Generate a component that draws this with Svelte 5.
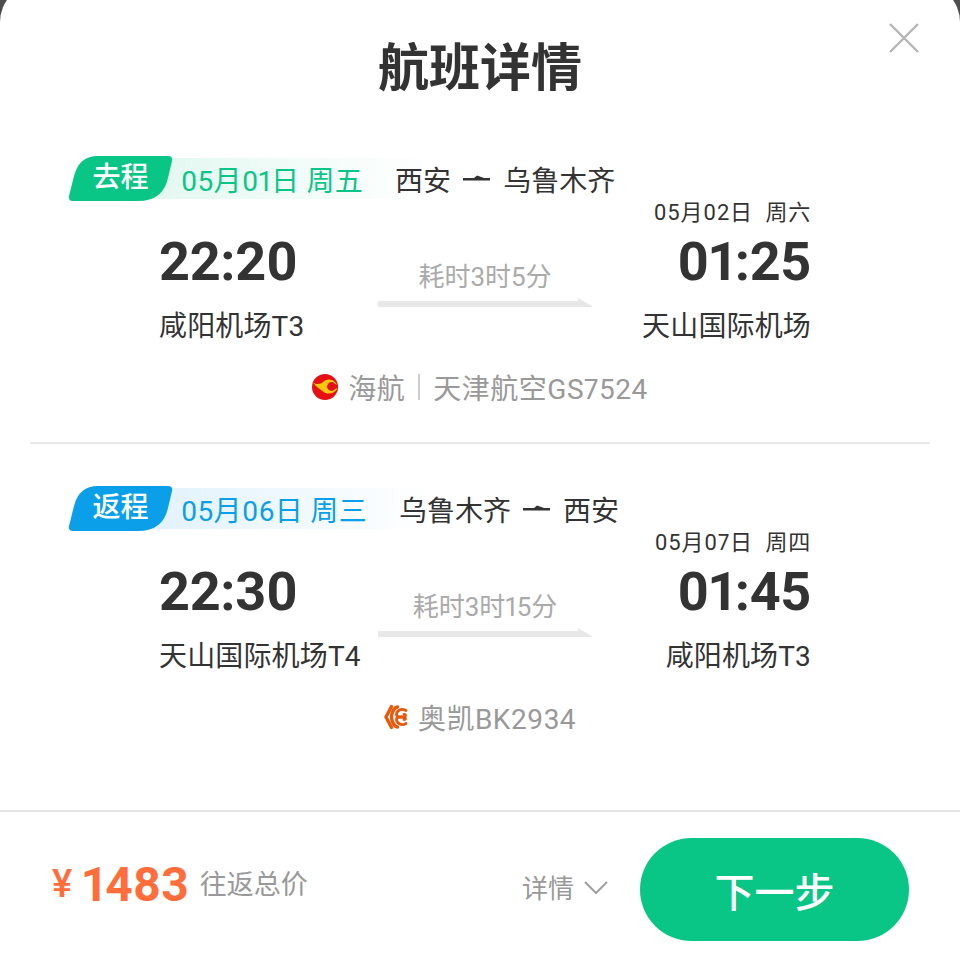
<script>
	const trips = [
		{
			kind: 'go',
			tag: '去程',
			date: '05月01日 周五',
			from: '西安',
			to: '乌鲁木齐',
			arriveDate: '05月02日  周六',
			depart: '22:20',
			arrive: '01:25',
			duration: '耗时3时5分',
			fromPort: '咸阳机场T3',
			toPort: '天山国际机场',
			carrier: '海航',
			operator: '天津航空GS7524'
		},
		{
			kind: 'back',
			tag: '返程',
			date: '05月06日 周三',
			from: '乌鲁木齐',
			to: '西安',
			arriveDate: '05月07日  周四',
			depart: '22:30',
			arrive: '01:45',
			duration: '耗时3时15分',
			fromPort: '天山国际机场T4',
			toPort: '咸阳机场T3',
			carrier: '奥凯BK2934',
			operator: ''
		}
	];
</script>

<div class="sheet">
	<header>
		<h1>航班详情</h1>
		<svg class="close" width="30" height="30" viewBox="0 0 30 30" fill="none" stroke="#b5b5b5" stroke-width="2.4">
			<path d="M1 1 L29 29 M29 1 L1 29" />
		</svg>
	</header>

	{#each trips as trip}
		<section class="trip {trip.kind}">
			<div class="head">
				<span class="tag">{trip.tag}</span>
				<span class="date">{trip.date}</span>
				<span class="route">
					{trip.from}
					<svg width="28" height="10" viewBox="0 0 28 10" fill="#333">
						<path d="M0 4 H11 L14 1.5 L21 4 H27 V6.6 H0 Z" />
					</svg>
					{trip.to}
				</span>
			</div>

			<div class="times">
				<div class="side">
					<div class="small-date"></div>
					<div class="clock">{trip.depart}</div>
					<div class="port">{trip.fromPort}</div>
				</div>
				<div class="middle">
					<div class="duration">{trip.duration}</div>
					<svg width="214" height="9" viewBox="0 0 214 9" fill="#e8e8e8">
						<path d="M0 3 H200 V0 L214 8 V9 H0 Z" />
					</svg>
				</div>
				<div class="side right">
					<div class="small-date">{trip.arriveDate}</div>
					<div class="clock">{trip.arrive}</div>
					<div class="port">{trip.toPort}</div>
				</div>
			</div>

			<div class="carrier">
				{#if trip.kind === 'go'}
					<svg width="26" height="26" viewBox="0 0 26 26">
						<circle cx="13" cy="13" r="13" fill="#e60f14" />
						<path d="M1 8.5 C5 11 9 10 11 8 C14 4.5 20 4.5 24 9 C25 11 25.4 13 25 15 C22 20 15 21 11 17.5 C8 15 4 13 1 8.5 Z" fill="#fbc80e" />
						<circle cx="19.5" cy="12.5" r="4.4" fill="#e60f14" />
						<path d="M19 9 L26 11 V14 L19 16 Z" fill="#e60f14" />
					</svg>
				{:else}
					<svg width="24" height="26" viewBox="0 0 24 26" fill="none" stroke="#e8590c" stroke-width="3.4" stroke-linecap="round">
						<path d="M7.5 2.5 L2 13 L7.5 23.5" />
						<path d="M13.5 3 C10 3.5 7.5 9 7.5 13 C7.5 17 10 22.5 13.5 23" />
						<path d="M22 6.5 C16.5 3.5 12.5 7.5 12.5 10.5 C12.5 13 16 14 20 13 C22 12.5 22 10.5 20 10.5" stroke-width="2.8" />
						<path d="M22 19.5 C16.5 22.5 12.5 18.5 12.5 15.5 C12.5 13 16 12 20 13 C22 13.5 22 15.5 20 15.5" stroke-width="2.8" />
					</svg>
				{/if}
				<span class="airline">{trip.carrier}</span>
				{#if trip.operator}
					<i class="sep"></i>
					<span class="airline">{trip.operator}</span>
				{/if}
			</div>
		</section>
	{/each}

	<footer>
		<div class="price">
			<span class="yen">¥</span>
			<span class="amount">1483</span>
			<span class="note">往返总价</span>
		</div>
		<div class="detail">
			详情
			<svg width="24" height="14" viewBox="0 0 24 14" fill="none" stroke="#a0a0a0" stroke-width="2">
				<path d="M1 1 L12 12 L23 1" />
			</svg>
		</div>
		<button type="button">下一步</button>
	</footer>
</div>

<style>
	:global(body) {
		margin: 0;
		background: #4d4d4d;
		overflow: hidden;
	}

	.sheet {
		height: 975px;
		margin-top: -16px;
		display: flex;
		flex-direction: column;
		background: #fff;
		border-radius: 38px 38px 0 0;
		font-family: Roboto, 'Noto Sans CJK SC', sans-serif;
		font-variant-numeric: proportional-nums;
		color: #333;
	}

	header {
		position: relative;
		height: 152px;
		box-sizing: border-box;
		padding-top: 16px;
		display: flex;
		align-items: center;
		justify-content: center;
	}

	h1 {
		margin: 0;
		font-size: 51px;
		font-weight: 700;
		line-height: 1;
	}

	.close {
		position: absolute;
		top: 39px;
		right: 41px;
	}

	.trip {
		margin: 0 30px;
		padding-top: 20px;
		box-sizing: border-box;
		--accent: #09c687;
		--tint: #e0f7ef;
	}

	.trip.go {
		height: 308px;
		border-bottom: 2px solid #e8e8e8;
	}

	.trip.back {
		padding-top: 42px;
		--accent: #0a9fe8;
		--tint: #dff1fc;
	}

	.head {
		display: flex;
		align-items: center;
		width: 362px;
		height: 41px;
		margin: 2px 0 2px 38px;
		background: linear-gradient(90deg, transparent 60px, var(--tint) 60px, #fff);
	}

	.tag {
		flex: none;
		width: 105px;
		height: 45px;
		line-height: 43px;
		text-align: center;
		font-size: 28px;
		font-weight: 500;
		color: #fff;
		background: var(--accent);
		clip-path: path('M30 0 H100 Q105 0 104 5 L100 22 Q95 45 70 45 H5 Q0 45 1 40 L6 20 Q11 0 30 0 Z');
	}

	.date {
		flex: none;
		margin-left: 8px;
		font-size: 28px;
		letter-spacing: 0.3px;
		white-space: pre;
		color: var(--accent);
	}

	.route {
		flex: none;
		display: flex;
		align-items: center;
		gap: 12px;
		margin-left: 32px;
		font-size: 28px;
	}

	.times {
		display: grid;
		grid-template-columns: 1fr 214px 1fr;
		padding: 0 119px 0 129px;
	}

	.small-date {
		height: 24px;
		line-height: 24px;
		font-size: 22px;
		letter-spacing: 0.8px;
		white-space: pre;
	}

	.clock {
		height: 66px;
		line-height: 66px;
		margin-top: 4px;
		font-size: 54px;
		font-weight: 700;
		letter-spacing: -0.3px;
	}

	.port {
		margin-top: 14px;
		height: 36px;
		line-height: 36px;
		font-size: 28px;
		letter-spacing: 0.15px;
		white-space: nowrap;
	}

	.right {
		text-align: right;
	}

	.middle {
		display: flex;
		flex-direction: column;
		align-items: center;
		padding-top: 58px;
		gap: 3px;
	}

	.duration {
		height: 36px;
		line-height: 36px;
		font-size: 26px;
		color: #aaa;
	}

	.carrier {
		display: flex;
		align-items: center;
		justify-content: center;
		gap: 10px;
		height: 40px;
		margin-top: 22px;
		font-size: 28px;
		color: #999;
	}

	.airline {
		letter-spacing: 0.5px;
	}

	.sep {
		width: 2px;
		height: 26px;
		margin: 0 3px;
		background: #ccc;
	}

	footer {
		margin-top: auto;
		height: 149px;
		box-sizing: border-box;
		border-top: 2px solid #e5e5e5;
		padding: 8px 51px 0 52px;
		display: flex;
		align-items: center;
	}

	.price {
		display: flex;
		align-items: center;
		margin-bottom: 11px;
		color: #ff6d3b;
		font-weight: 700;
	}

	.yen {
		font-size: 38px;
		font-weight: 500;
		margin-right: 10px;
	}

	.amount {
		font-size: 48px;
	}

	.note {
		margin: 0 0 4px 11px;
		font-size: 27px;
		font-weight: 400;
		color: #999;
	}

	.detail {
		margin: 0 0 6px auto;
		display: flex;
		align-items: center;
		gap: 10px;
		font-size: 26px;
		color: #999;
	}

	.detail svg {
		margin-top: 2px;
	}

	button {
		margin-left: 32px;
		width: 269px;
		height: 103px;
		border: none;
		border-radius: 52px;
		background: #09c687;
		color: #fff;
		font-family: inherit;
		font-size: 40px;
		font-weight: 500;
	}
</style>
